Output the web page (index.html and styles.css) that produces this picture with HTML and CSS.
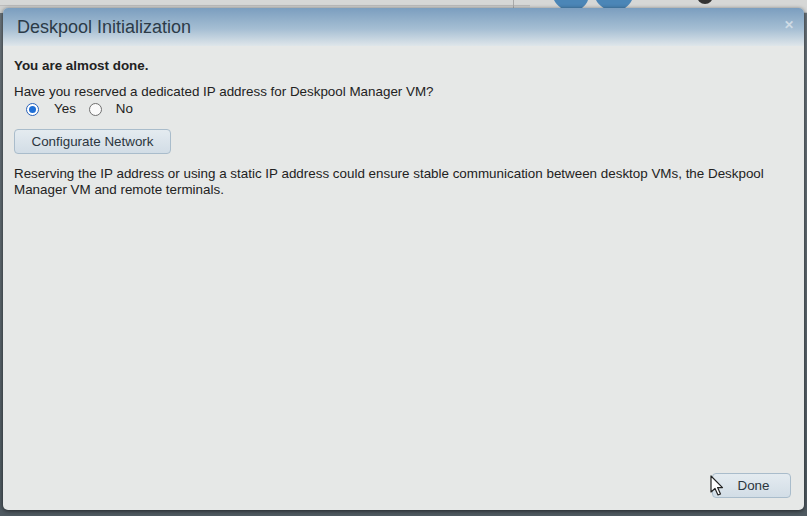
FILE: index.html
```html
<!DOCTYPE html>
<html>
<head>
<meta charset="utf-8">
<link rel="stylesheet" href="styles.css">
</head>
<body>
<div class="backdrop">
  <div class="topstrip">
    <div class="tab"></div>
    <div class="divider"></div>
    <svg class="logo" width="80" height="12" viewBox="0 0 80 12"><path d="M0 0 L34 0 C32 6 26 11 18 11 C9 11 3 6 0 0 Z" fill="#4b86b7"/><path d="M42 0 L78 0 C75 6 69 11 61 11 C52 11 45 6 42 0 Z" fill="#4b86b7"/></svg>
    <div class="dot"></div>
  </div>
</div>
<div class="dialog">
  <div class="titlebar">
    <span class="title">Deskpool Initialization</span>
    <span class="close">&#x2715;</span>
  </div>
  <div class="content">
    <div class="strong">You are almost done.</div>
    <div class="question">Have you reserved a dedicated IP address for Deskpool Manager VM?</div>
    <div class="radios">
      <label class="radio"><span class="circle checked"></span><span class="lbl">Yes</span></label>
      <label class="radio"><span class="circle"></span><span class="lbl">No</span></label>
    </div>
    <button class="btn config">Configurate Network</button>
    <p class="note">Reserving the IP address or using a static IP address could ensure stable communication between desktop VMs, the Deskpool Manager VM and remote terminals.</p>
  </div>
  <div class="footer">
    <button class="btn done">Done</button>
    <svg class="cursor" width="14" height="22" viewBox="0 0 14 22"><path d="M1 1 L1 17 L5 13.5 L8 20 L10.5 19 L7.6 12.6 L12.5 12.6 Z" fill="#fff" stroke="#222" stroke-width="1.2" stroke-linejoin="round"/></svg>
  </div>
</div>
</body>
</html>
```
FILE: styles.css
```css
html, body {
  margin: 0;
  padding: 0;
  width: 807px;
  height: 516px;
  overflow: hidden;
}
body {
  background: #5f6a71;
  font-family: "Liberation Sans", Arial, sans-serif;
  position: relative;
}
.backdrop {
  position: absolute;
  inset: 0;
  background: linear-gradient(#6b757c, #4f5a61);
}
.topstrip {
  position: relative;
  height: 12px;
  background: #d6d7d6;
  border-bottom: 1px solid #b9bcbd;
}
.tab {
  position: absolute;
  left: 0;
  top: 5px;
  width: 530px;
  height: 7px;
  background: #cfd0cf;
  border-top: 1px solid #bcbcbc;
}
.divider {
  position: absolute;
  left: 513px;
  top: 0;
  width: 1px;
  height: 12px;
  background: #a9a9a9;
}
.logo {
  position: absolute;
  left: 554px;
  top: 0;
}
.dot {
  position: absolute;
  left: 697px;
  top: -6px;
  width: 16px;
  height: 10px;
  border-radius: 0 0 8px 8px;
  background: #333;
}
.dialog {
  position: absolute;
  left: 3px;
  top: 8px;
  width: 801px;
  height: 502px;
  background: #e6e8e7;
  border-radius: 5px;
  box-shadow: 0 1px 4px rgba(0,0,0,0.6);
  display: flex;
  flex-direction: column;
  overflow: hidden;
}
.titlebar {
  height: 38px;
  flex: none;
  background: linear-gradient(#7b9ebf 0%, #a5bed3 55%, #dfe6ea 100%);
  display: flex;
  align-items: center;
  justify-content: space-between;
  padding: 0 10px 0 14px;
}
.title {
  font-size: 18px;
  color: #2c3b48;
}
.close {
  font-size: 12px;
  color: #cfdbe5;
  font-weight: bold;
  margin-top: -4px;
}
.content {
  flex: 1;
  padding: 12px 30px 0 11px;
  font-size: 13.4px;
  line-height: 16px;
  color: #222;
}
.strong {
  font-weight: bold;
}
.question {
  margin-top: 10px;
}
.radios {
  display: flex;
  align-items: center;
  height: 16px;
  margin-top: 1px;
  padding-left: 12px;
}
.radio {
  display: flex;
  align-items: center;
  margin-right: 13px;
}
.lbl {
  margin-left: 15px;
}
.radio + .radio .lbl {
  margin-left: 14px;
}
.circle {
  width: 11px;
  height: 11px;
  border-radius: 50%;
  border: 1px solid #6f6f6f;
  background: #fafafa;
  box-sizing: content-box;
  position: relative;
}
.circle.checked {
  border-color: #2a62b8;
  background: #fff;
}
.circle.checked::after {
  content: "";
  position: absolute;
  left: 2px;
  top: 2px;
  width: 7px;
  height: 7px;
  border-radius: 50%;
  background: #1f6fd6;
}
.btn {
  font-family: "Liberation Sans", Arial, sans-serif;
  font-size: 13.4px;
  color: #2b3640;
  border: 1px solid #a9bccb;
  border-radius: 4px;
  background: linear-gradient(#e4ebf0, #d2dde6);
  padding: 0;
  cursor: default;
}
.config {
  display: block;
  margin-top: 12px;
  width: 157px;
  height: 25px;
}
.note {
  margin: 12px 0 0 0;
}
.footer {
  flex: none;
  height: 37px;
  display: flex;
  justify-content: flex-end;
  align-items: flex-start;
  padding-right: 13px;
  position: relative;
}
.done {
  width: 79px;
  height: 25px;
  font-size: 13.4px;
  padding-left: 4px;
}
.cursor {
  position: absolute;
  left: 707px;
  top: 2px;
}
```
